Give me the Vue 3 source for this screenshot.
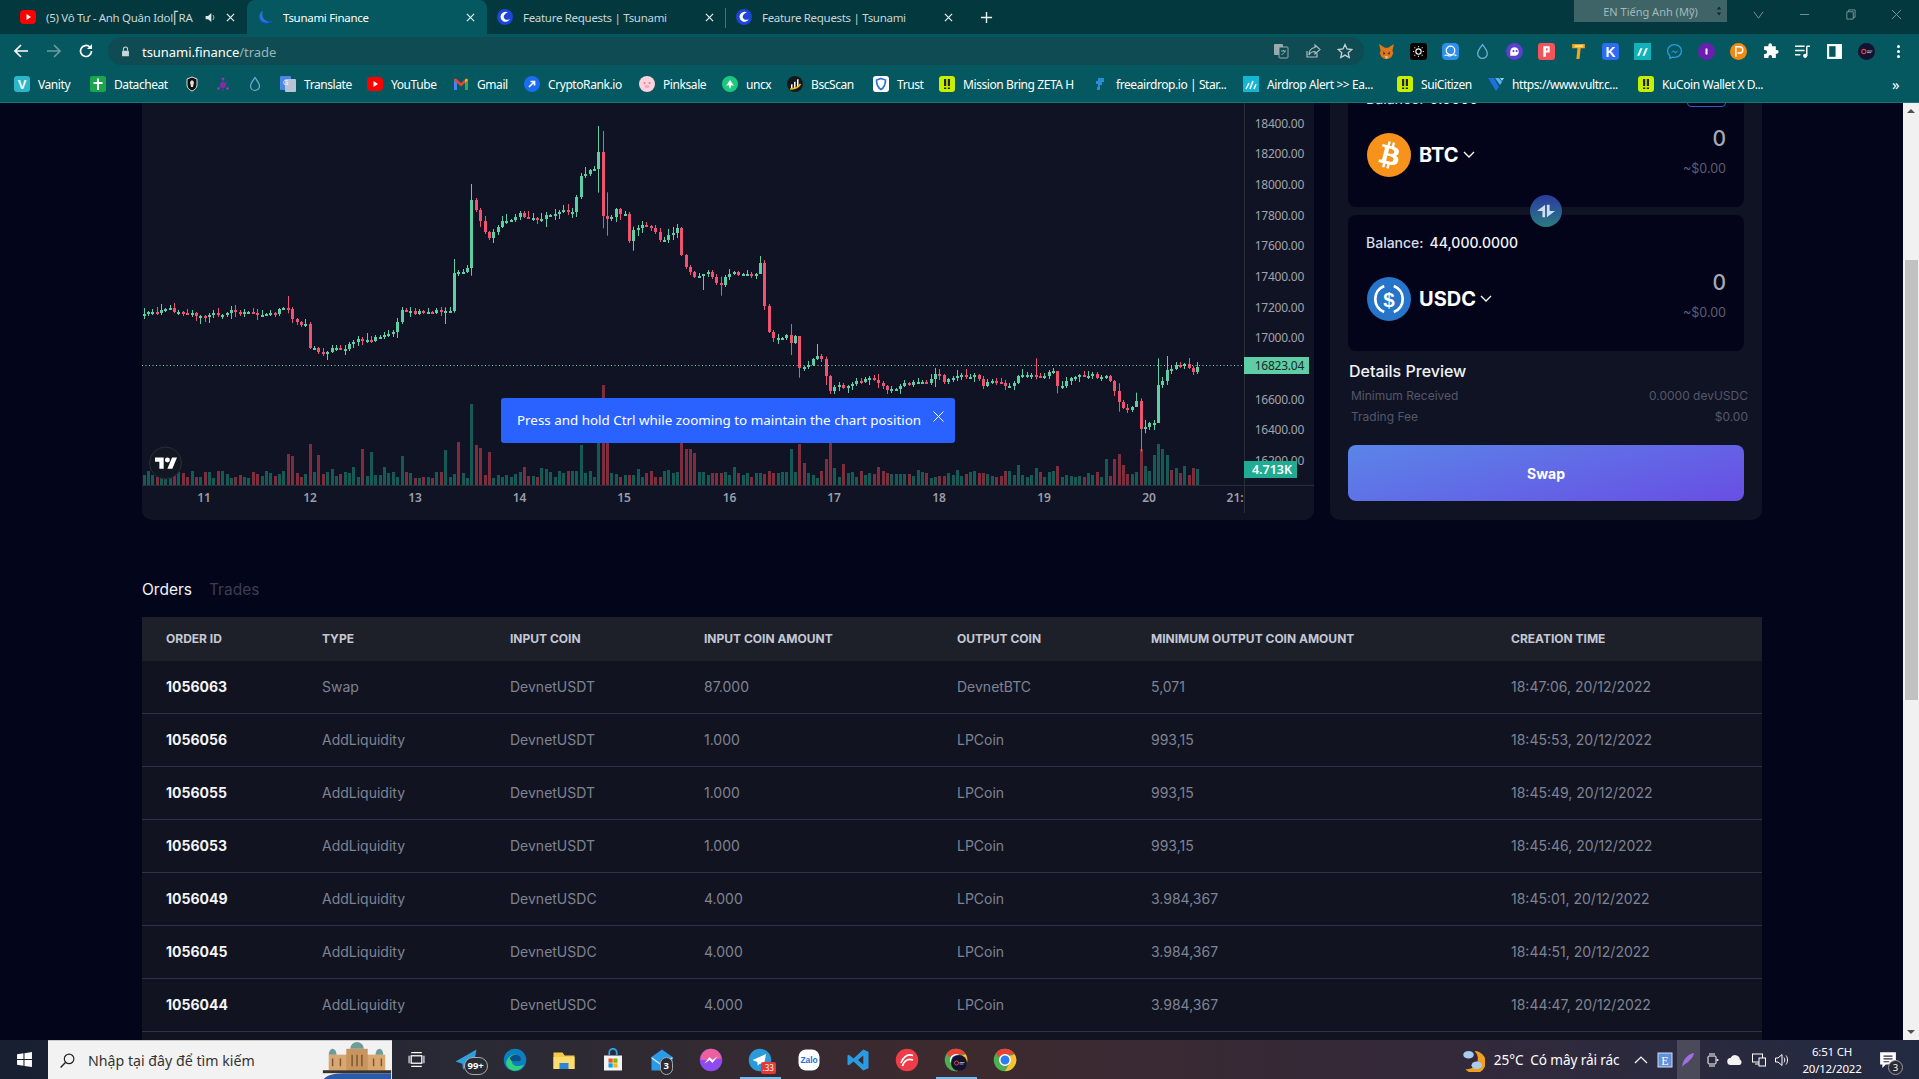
<script setup>
const icons = {
  vanity: '<rect width="16" height="16" rx="3" fill="#2bb7c9"/><text x="8" y="13" font-size="13" font-weight="700" text-anchor="middle" fill="#fff" font-family="Liberation Sans">V</text>',
  datacheat: '<rect width="16" height="16" rx="2" fill="#1aa64b"/><path d="M7 2.500h2V6h3.500v2H9v6H7V8H3.500V6H7z" fill="#fff"/>',
  shield: '<path d="M8 1l5 2v6c0 3-2.500 5-5 6-2.500-1-5-3-5-6V3z" fill="#111" stroke="#ddd"/><path d="M8 4l2 2-1 5H7L6 6z" fill="#ddd"/>',
  nodes: '<circle cx="8" cy="9" r="3" fill="#7c2fa8"/><circle cx="8" cy="3" r="1.300" fill="#9a3fb5"/><circle cx="3.500" cy="12.500" r="1.300" fill="#9a3fb5"/><circle cx="12.500" cy="12.500" r="1.300" fill="#9a3fb5"/><path d="M8 3v12M3.500 12.500L12.500 6" stroke="#7c2fa8"/>',
  drop: '<path d="M8 1.500c2 3 4.500 5.500 4.500 8.500a4.500 4.500 0 0 1-9 0c0-3 2.500-5.500 4.500-8.500z" fill="none" stroke="#6fb0dd" stroke-width="1.200"/>',
  translate: '<rect width="11" height="14" rx="1" fill="#4a86e8"/><rect x="5" y="3" width="11" height="13" rx="1" fill="#b8c4d4"/><text x="3" y="9" font-size="7" fill="#fff" font-family="Liberation Sans">G</text>',
  youtube: '<rect y="1" width="16" height="14" rx="4" fill="#f00"/><path d="M6.500 5l4.500 3-4.500 3z" fill="#fff"/>',
  gmail: '<path d="M1 3v11h3V7l4 3.500L12 7v7h3V3l-2-.5L8 7 3 2.500z" fill="#ea4335"/><path d="M1 4v10h3V7z" fill="#4285f4"/><path d="M12 7v7h3V4z" fill="#34a853"/><path d="M12 7l3-3-2-1.500L12 4z" fill="#fbbc04"/>',
  crypto: '<circle cx="8" cy="8" r="8" fill="#1b6cf2"/><path d="M5 11l5-5M6.500 5.500H10.500V9.500" stroke="#fff" stroke-width="1.700" fill="none"/>',
  pink: '<circle cx="8" cy="8" r="8" fill="#fbd3de"/><circle cx="5.500" cy="7" r="1" fill="#e77"/><circle cx="10.500" cy="7" r="1" fill="#e77"/><ellipse cx="8" cy="10.500" rx="2.500" ry="1.500" fill="#f7a8bb"/>',
  uncx: '<circle cx="8" cy="8" r="8" fill="#1fc77e"/><path d="M4 10l4-6 4 6-2.500-1L8 13 6.500 9z" fill="#fff"/>',
  bsc: '<circle cx="8" cy="8" r="8" fill="#16181c"/><path d="M4 12V8.500l1.500-.5V12zM7 12V6l1.500-.5V12zM10 12V3.500L11.500 3v7z" fill="#fff"/><path d="M3 13c4 0 8-1 10.500-5" stroke="#f0b90b" stroke-width="1.500" fill="none"/>',
  trust: '<rect width="16" height="16" rx="3" fill="#fff"/><path d="M8 2.500l4.500 1.500c0 4.500-1 7.500-4.500 9.500C4.500 11.500 3.500 8.500 3.500 4z" fill="none" stroke="#2a6fe0" stroke-width="1.700"/>',
  zeta: '<rect width="16" height="16" rx="3" fill="#c6f000"/><path d="M5 3h2.200v7H5zM8.800 3H11v7H8.800zM5 11.500h2.200V13H5zM8.800 11.500H11V13H8.800z" fill="#222"/>',
  free: '<path d="M6 2h6v4h-2v3H8v5H5v-3h1V8H4V5h2z" fill="#2a8bd8"/>',
  airdrop: '<rect width="16" height="16" fill="#15b5d4"/><path d="M3 13l3-6M7 13l3-8M11 13l2-5" stroke="#fff" stroke-width="1.500"/>',
  vultr: '<path d="M0 2h6l5 9-3 4z" fill="#1e6fe0"/><path d="M7 2h4l3 4-2 3z" fill="#58b3f0"/><path d="M12 2h4l-2 3z" fill="#9bd5fa"/>',
  tsunami: '<circle cx="8" cy="8" r="8" fill="#1d45d8"/><path d="M11 3.500a5 5 0 1 0 2 6.500c-2 1.500-5 1-6-1s1-5 4-5.500z" fill="#fff"/>',
  tsuActive: '<path d="M6 1.500c-3 2-5 6-2 10 3 3 8 3 11 1-4 .5-7-.5-8.500-3C5 7 5 4 6 1.500z" fill="#2f6fe0"/><path d="M2 11c3 4 9 4 13 1.500" stroke="#1d45d8" fill="none"/>',
  fox: '<path d="M1 1l5.500 3.500h3L15 1l-1.500 6.500 1 2-2 4-3 1.500h-3l-3-1.500-2-4 1-2z" fill="#e2761b"/><path d="M5 8l2 2-2 1zM11 8l-2 2 2 1z" fill="#233447"/><path d="M6.500 12.500h3L8 15z" fill="#f6c9a0"/>',
  blackdots: '<rect width="16" height="16" rx="3" fill="#000"/><circle cx="8" cy="8" r="2.500" fill="none" stroke="#fff"/><path d="M4 4h1v1H4zM7.500 3h1v1h-1zM11 4h1v1h-1zM3 7.500h1v1H3zM12 7.500h1v1h-1zM4 11h1v1H4zM7.500 12h1v1h-1zM11 11h1v1h-1z" fill="#fff"/>',
  aqua: '<rect width="16" height="16" rx="4" fill="#2f8fe8"/><circle cx="8" cy="7" r="4" fill="none" stroke="#fff" stroke-width="1.200"/><path d="M2.500 12c2-2 3.500 1 5.500 0s3.500-2 5.500 0" stroke="#fff" fill="none"/>',
  ghost: '<circle cx="8" cy="8" r="8" fill="#5a3fd0"/><path d="M4 8a4 4 0 0 1 8 0c0 3-2 4-4 4H4z" fill="#fff"/><circle cx="7" cy="7.500" r="1" fill="#5a3fd0"/><circle cx="10" cy="7.500" r="1" fill="#5a3fd0"/>',
  redp: '<rect width="16" height="16" rx="3" fill="#f2545b"/><path d="M5 3h6v6H7.500v4H5z" fill="#fff"/><path d="M7.500 5H9v2H7.500z" fill="#f2545b"/>',
  ttt: '<path d="M2 1h12v4h-4l-1 10H6L7 5H2z" fill="#f4a31d"/><path d="M5 2l-1 2h8l.5-2z" fill="#fbe08a"/>',
  kkk: '<rect width="16" height="16" rx="3" fill="#2d6bf0"/><text x="8" y="13" font-size="13" font-weight="700" text-anchor="middle" fill="#fff" font-family="Liberation Sans">K</text>',
  mm: '<rect width="16" height="16" fill="#11b3b8"/><path d="M3 12l3-7h2l-3 7zM8 12l3-7h2l-3 7z" fill="#fff"/>',
  msgr: '<path d="M8 1.500c-4 0-6.500 2.800-6.500 6 0 2 .8 3.500 2.200 4.700v2.300l2.200-1.200c.7.200 1.400.3 2.100.3 4 0 6.500-2.800 6.500-6s-2.500-6.100-6.500-6.100z" fill="none" stroke="#2c9be8" stroke-width="1.200"/><path d="M4 10l3-3.200 2 1.700 3-2-3 3.300-2-1.700z" fill="#2c9be8"/>',
  purple: '<circle cx="8" cy="8" r="8" fill="#6a1fb0"/><rect x="7" y="5" width="2" height="6" rx="1" fill="#f5e6ff"/>',
  orange: '<circle cx="8" cy="8" r="8" fill="#f28a11"/><path d="M5.500 13V3.500h3.500a3 3 0 0 1 0 6H7" fill="none" stroke="#fff" stroke-width="1.400"/>',
  puzzle: '<path d="M6 2a1.700 1.700 0 0 1 3.400 0v1H13v3.600h1a1.700 1.700 0 0 1 0 3.400h-1V14H9.500v-1a1.700 1.700 0 0 0-3.400 0v1H2v-3.700h1a1.800 1.800 0 0 0 0-3.600H2V3h4z" fill="#fff"/>',
  music: '<path d="M1 3h9M1 7h9M1 11h5" stroke="#fff" stroke-width="1.400"/><path d="M12 3h3M12 3v9" stroke="#fff" stroke-width="1.400" fill="none"/><circle cx="10.500" cy="12" r="2" fill="#fff"/>',
  side: '<rect x="1" y="1" width="14" height="14" fill="#fff"/><rect x="3" y="3" width="6" height="10" fill="#05565d"/>',
  avatar: '<circle cx="8" cy="8" r="8" fill="#141232"/><circle cx="5.500" cy="8" r="2" fill="none" stroke="#d44" stroke-width="1"/><path d="M8.500 7.500h5M8.500 9h4" stroke="#bbb" stroke-width=".8"/>',
  translateOut: '<rect x="1" y="1" width="9" height="11" rx="1" fill="#9aa9ad"/><rect x="6" y="4" width="9" height="11" rx="1" fill="#0e4c54" stroke="#9aa9ad"/><path d="M8 8h5M10.500 7v1M12 8c-.5 2-2 3-3.500 3.500" stroke="#9aa9ad" fill="none"/>',
  share: '<path d="M2 8v6h10v-4" fill="none" stroke="#a9bcbf" stroke-width="1.200"/><path d="M10 2l5 4.500-5 4.500V8.500C7 8.500 5 10 4 12c0-4 2-7 6-7.500z" fill="none" stroke="#a9bcbf" stroke-width="1.200"/>',
  star: '<path d="M8 1.500l2 4.500 4.800.5-3.600 3.200 1 4.800L8 12.100 3.800 14.500l1-4.800L1.200 6.500 6 6z" fill="none" stroke="#c2d0d2" stroke-width="1.300"/>',
  lock: '<rect x="3" y="7" width="10" height="8" rx="1" fill="#cbd5d6"/><path d="M5 7V4.500a3 3 0 0 1 6 0V7" fill="none" stroke="#cbd5d6" stroke-width="1.500"/>',
  win: '<path d="M1 3l6-.9V7.500H1zM8 2l7-1v6.500H8zM1 8.500h6v5.400l-6-.9zM8 8.500h7V15l-7-1z" fill="#fff"/>',
  search: '<circle cx="9.500" cy="6.500" r="4.500" fill="none" stroke="#222" stroke-width="1.100"/><path d="M6.300 9.700L1.500 14.500" stroke="#222" stroke-width="1.300"/>',
  building: '<rect x="6" y="14" width="58" height="16" fill="#d9a871"/><rect x="24" y="8" width="22" height="22" fill="#c8955f"/><path d="M28 8a7 7 0 0 1 14 0zM6 14a4 6 0 0 1 8 0zM54 14a4 6 0 0 1 8 0z" fill="#6f9c96"/><path d="M10 18v8M18 18v8M30 14v12M35 14v12M40 14v12M52 18v8M60 18v8" stroke="#7c5532" stroke-width="1.500"/><rect y="30" width="70" height="3" fill="#3a3026"/><path d="M0 40c4-6 14-7 24-7h46v7z" fill="#2a5aa8"/>',
  tasks: '<path d="M3 1.500h10M3 14.500h10" stroke="#fff" stroke-width="1.200"/><rect x="3" y="4.500" width="10" height="7" fill="none" stroke="#fff" stroke-width="1.200"/><path d="M1 4.500v7M15 4.500v7" stroke="#fff"/>',
  tele: '<path d="M1 9L15 1l-2.500 14-4-3.500L6 14.500l-.5-4z" fill="#2f9fe0"/>',
  edge: '<circle cx="8" cy="8" r="7.500" fill="#0c7ec2"/><path d="M2 10c1-5 5-6 7-5.500 3 .5 3.500 3 2.500 4.500H6c0 3 4 4 8 2-1.500 3.500-5 4.500-7.500 4C4 14.500 2.500 12.500 2 10z" fill="#2fd07e"/><path d="M6 9h5.500c1-1.500.5-4-2.500-4.500C7 4.200 5 5.500 4.500 7z" fill="#0a4f8a"/>',
  folder: '<path d="M1 3h6l1.500 2H15v9H1z" fill="#f7c948"/><rect x="1" y="6" width="14" height="8" fill="#ffdb6e"/><rect x="5" y="10" width="6" height="4" fill="#2a86d8"/>',
  store: '<path d="M2 5h12v10H2z" fill="#f1f3f5"/><path d="M5.500 5V3a2.500 2.500 0 0 1 5 0v2" fill="none" stroke="#2ca0e8" stroke-width="1.200"/><rect x="5" y="7" width="2.800" height="2.800" fill="#f25022"/><rect x="8.200" y="7" width="2.800" height="2.800" fill="#7fba00"/><rect x="5" y="10.200" width="2.800" height="2.800" fill="#00a4ef"/><rect x="8.200" y="10.200" width="2.800" height="2.800" fill="#ffb900"/>',
  mail: '<path d="M1 6l7-5 7 5v9H1z" fill="#2a9be8"/><path d="M1 6l7 5 7-5v1l-7 5-7-5z" fill="#d7eefc"/>',
  mess: '<circle cx="8" cy="8" r="7.500" fill="#8d4bf0"/><path d="M1 8a7 7 0 0 1 14-1L8 8z" fill="#ee5fa0"/><path d="M3.500 10.500L7 6l2 2 3.500-2.500L9 10 7 8z" fill="#fff"/>',
  teleC: '<circle cx="8" cy="8" r="7.500" fill="#2b9ad9"/><path d="M3 8l9-4-1.500 8-2.500-1.700-1.500 1.500-.3-2.500z" fill="#fff"/>',
  zalo: '<rect x="1" y="1" width="14" height="14" rx="5" fill="#fff"/><text x="8" y="10" font-size="5.600" font-weight="700" text-anchor="middle" fill="#1a6fe0" font-family="Liberation Sans">Zalo</text>',
  vsc: '<path d="M11.500 1L15 2.500v11L11.500 15 5 9l-3 2.500L1 11V5l1-.5L5 7zM11.500 5L8 8l3.500 3z" fill="#2a9be0"/>',
  red: '<circle cx="8" cy="8" r="7.500" fill="#ee3d48"/><path d="M4 10c2-5 5-6 8-5M5 12c1-4 4-5 7-4" stroke="#fff" fill="none" stroke-width="1.100"/>',
  chrome: '<circle cx="8" cy="8" r="7.500" fill="#4caf50"/><path d="M8 .5a7.500 7.500 0 0 1 6.500 3.700L8 4.500 3 6 2.200 3.300A7.500 7.500 0 0 1 8 .5z" fill="#ea4335"/><path d="M14.500 4.200A7.500 7.500 0 0 1 8 15.500l3.500-6-1-4z" fill="#fbc02d"/><circle cx="8" cy="8" r="3.500" fill="#2d7cf0" stroke="#fff"/>',
  weather: '<path d="M9 2a7.500 7.500 0 1 1-6 12 7 7 0 0 0 6-12z" fill="#f0a01e"/><ellipse cx="5" cy="4.500" rx="3.500" ry="2.500" fill="#a9cdef"/><ellipse cx="10.500" cy="11.500" rx="3.500" ry="2.500" fill="#a9cdef"/>',
  up: '<path d="M2 11l6-6 6 6" fill="none" stroke="#fff" stroke-width="1.200"/>',
  ee: '<rect x="1" y="1" width="14" height="14" fill="#5f92d8" stroke="#cfe0f5"/><text x="8" y="12.500" font-size="12" text-anchor="middle" fill="#fff" font-family="Liberation Serif">E</text>',
  feather: '<path d="M14 1C8 2 3 7 2 15c2-3 6-4 8-7 2-2 3.500-4 4-7z" fill="#a06ee0"/>',
  camera: '<rect x="4" y="4" width="8" height="8" rx="1" fill="none" stroke="#fff"/><path d="M5 2h6M5 14h6" stroke="#fff"/><circle cx="13.500" cy="8" r="1" fill="#fff"/>',
  cloud: '<path d="M4 13a3.500 3.500 0 0 1-.5-7 5 5 0 0 1 9.500 1.500A3 3 0 0 1 12.500 13z" fill="#f3f3f3"/>',
  net: '<rect x="1.500" y="2" width="10" height="8" fill="none" stroke="#fff"/><rect x="8" y="6" width="6.500" height="8" fill="#2b2a3f" stroke="#fff"/><path d="M4 12h4" stroke="#fff"/>',
  speaker: '<path d="M1.500 6h2.500l4-3.500v11L4 10H1.500z" fill="none" stroke="#fff"/><path d="M10 5.500c1 1.500 1 3.500 0 5M12 3.500c2 2.500 2 6.500 0 9" fill="none" stroke="#fff"/>',
  notify: '<path d="M1 1h14v11H6l-3 3v-3H1z" fill="#fff"/><path d="M4 4.500h8M4 7h8M4 9.500h5" stroke="#2c2a40"/>'
}

const tabs = [
  { title: '(5) Vô Tư - Anh Quân Idol⎡RA', icon: 'youtube', first: true, sound: true },
  { title: 'Tsunami Finance', icon: 'tsuActive', active: true },
  { title: 'Feature Requests | Tsunami', icon: 'tsunami', sep: true },
  { title: 'Feature Requests | Tsunami', icon: 'tsunami' }
]
const bookmarks = [
  ['vanity', 'Vanity', 76], ['datacheat', 'Datacheat', 94], ['shield', '', 31], ['nodes', '', 32], ['drop', '', 33],
  ['translate', 'Translate', 87], ['youtube', 'YouTube', 86], ['gmail', 'Gmail', 71], ['crypto', 'CryptoRank.io', 115],
  ['pink', 'Pinksale', 83], ['uncx', 'uncx', 65], ['bsc', 'BscScan', 86], ['trust', 'Trust', 66],
  ['zeta', 'Mission Bring ZETA H', 153], ['free', 'freeairdrop.io | Star...', 151], ['airdrop', 'Airdrop Alert >> Ea...', 154],
  ['zeta', 'SuiCitizen', 91], ['vultr', 'https://www.vultr.c...', 150], ['zeta', 'KuCoin Wallet X D...', 230]
].map(([icon, label, w]) => ({ icon, label, w }))
const exts = ['fox', 'blackdots', 'aqua', 'drop', 'ghost', 'redp', 'ttt', 'kkk', 'mm', 'msgr', 'purple', 'orange', 'puzzle', 'music', 'side', 'avatar']
const apps = [
  { i: 'tele', badge: '99+' }, { i: 'edge' }, { i: 'folder' }, { i: 'store' }, { i: 'mail', badge: '3' }, { i: 'mess' },
  { i: 'teleC', red: '.33', on: true }, { i: 'zalo' }, { i: 'vsc' }, { i: 'red' }, { i: 'chrome', dot: true, on: true }, { i: 'chrome' }
]
const tray = ['up', 'ee', 'feather', 'camera', 'cloud', 'net', 'speaker']

const columns = ['ORDER ID', 'TYPE', 'INPUT COIN', 'INPUT COIN AMOUNT', 'OUTPUT COIN', 'MINIMUM OUTPUT COIN AMOUNT', 'CREATION TIME']
const colWidths = [156, 188, 194, 253, 194, 360, 275]
const rows = [
  ['1056063', 'Swap', 'DevnetUSDT', '87.000', 'DevnetBTC', '5,071', '18:47:06, 20/12/2022'],
  ['1056056', 'AddLiquidity', 'DevnetUSDT', '1.000', 'LPCoin', '993,15', '18:45:53, 20/12/2022'],
  ['1056055', 'AddLiquidity', 'DevnetUSDT', '1.000', 'LPCoin', '993,15', '18:45:49, 20/12/2022'],
  ['1056053', 'AddLiquidity', 'DevnetUSDT', '1.000', 'LPCoin', '993,15', '18:45:46, 20/12/2022'],
  ['1056049', 'AddLiquidity', 'DevnetUSDC', '4.000', 'LPCoin', '3.984,367', '18:45:01, 20/12/2022'],
  ['1056045', 'AddLiquidity', 'DevnetUSDC', '4.000', 'LPCoin', '3.984,367', '18:44:51, 20/12/2022'],
  ['1056044', 'AddLiquidity', 'DevnetUSDC', '4.000', 'LPCoin', '3.984,367', '18:44:47, 20/12/2022']
]

// --- chart -------------------------------------------------------------
const z3x = (x) => 130 + x / 2.45
const z4x = (x) => 770 + x / 2.8
const zy = (y) => 100 + y / 3
const wp3 = [[30,642],[90,625],[150,640],[175,652],[240,635],[300,640],[340,642],[385,625],[400,665],[430,672],[440,740],[465,760],[500,742],[530,745],[550,722],[590,720],[640,700],[655,665],[665,635],[700,640],[740,640],[760,630],[790,635],[793,515],[830,510],[836,297],[860,370],[878,420],[900,375],[950,345],[1000,358],[1040,335],[1085,335],[1105,225],[1135,210],[1147,155],[1157,350],[1170,360],[1190,330],[1220,350],[1222,420],[1235,385],[1280,380],[1300,420],[1340,385],[1352,480],[1362,505],[1385,530],[1415,515],[1445,555],[1470,520],[1540,525],[1545,480],[1553,610]]
const wp4 = [[0,720],[10,720],[45,700],[55,735],[72,700],[82,800],[100,805],[120,775],[150,770],[157,840],[170,885],[185,850],[205,870],[240,850],[275,830],[300,850],[350,875],[365,850],[410,850],[450,840],[465,815],[490,845],[525,825],[580,830],[590,855],[640,845],[660,860],[690,845],[695,825],[745,828],[760,835],[775,810],[795,810],[805,860],[840,840],[870,825],[890,820],[910,835],[950,832],[965,880],[990,925],[1010,920],[1025,900],[1037,985],[1050,975],[1075,965],[1088,840],[1100,840],[1110,810],[1125,812],[1135,790],[1170,800],[1185,818],[1197,795]]
const points = [...wp3.map(([x, y]) => [z3x(x), zy(y)]), ...wp4.map(([x, y]) => [z4x(x), zy(y)])]
const X0 = 143.5
const STEP = 4.373
const COUNT = 242
let seed = 12345
const rnd = () => { seed = (seed * 1103515245 + 12345) & 0x7fffffff; return seed / 0x7fffffff }
const idxOf = (x) => Math.round((x - X0) / STEP)
const closeAt = (x) => {
  for (let k = 1; k < points.length; k++) {
    if (x <= points[k][0]) {
      const [a, b] = [points[k - 1], points[k]]
      const t = (x - a[0]) / Math.max(b[0] - a[0], 0.01)
      return a[1] + (b[1] - a[1]) * t
    }
  }
  return points[points.length - 1][1]
}
const wicks = new Map()
;[[836,252,527],[793,477,638],[386,588,640],[1147,78,278],[1157,93,385],[1170,277,407],[1233,380,452],[1405,525,570],[1447,530,587],[1545,468,522],[1553,480,630],[772,622,672],[173,645,672]]
  .forEach(([x, a, b]) => wicks.set(idxOf(z3x(x)), [zy(a), zy(b)]))
;[[57,672,765],[82,725,833],[132,732,780],[155,770,855],[743,775,838],[805,835,880],[975,850,935],[1037,895,1055],[1025,878,905],[1088,775,920],[1110,768,855],[1050,960,1000]]
  .forEach(([x, a, b]) => wicks.set(idxOf(z4x(x)), [zy(a), zy(b)]))
const GREEN = '#5fcea4'
const RED = '#ef5370'
const closes = []
for (let i = 0; i < COUNT; i++) closes.push(Math.round(closeAt(X0 + i * STEP) + (rnd() - 0.5) * 4.4))
const candles = closes.map((c, i) => {
  const o = i ? closes[i - 1] : c + 1
  const top = Math.min(o, c)
  const bottom = Math.max(o, c)
  const w = wicks.get(i)
  const hi = w ? w[0] : Math.round(top - rnd() * rnd() * 7 - 1)
  const lo = w ? w[1] : Math.round(bottom + rnd() * rnd() * 7 + 1)
  return {
    x: Math.round(X0 + i * STEP),
    top,
    h: Math.max(bottom - top, 2),
    hi,
    lo,
    color: c <= o ? GREEN : RED
  }
})
const vols = candles.map((c) => ({ x: c.x - 1, h: Math.round(7 + rnd() * 7 + (rnd() > 0.88 ? 5 : 0)), up: c.color === GREEN }))
const setVol = (x, top, up) => {
  const v = vols[idxOf(x)]
  if (v) { v.h = Math.round((1156 - top) / 3); v.up = up }
}
;[[386,1062,0],[395,1070,0],[438,1032,0],[462,1065,0],[566,1047,0],[589,1056,1],[665,1068,1],[770,1050,1],[802,1026,0],[836,912,1],[845,1035,0],[856,1045,0],[878,1056,0],[1105,1035,1],[1147,1000,1],[1157,855,0],[1167,1030,0],[1350,1030,0],[1360,1047,0],[1370,1047,0],[1383,1060,0]]
  .forEach(([x, t, u]) => setVol(z3x(x), t, !!u))
;[[58,1047,1],[82,1032,0],[93,1090,0],[155,1077,0],[166,1030,0],[180,1105,1],[203,1092,0],[695,1095,1],[745,1105,1],[805,1098,0],[940,1078,1],[965,1078,0],[975,1062,0],[987,1095,0],[1037,1048,0],[1050,1098,1],[1075,1065,1],[1085,1032,1],[1098,1047,1],[1110,1065,1],[1122,1112,0],[1160,1100,1],[1197,1107,1]]
  .forEach(([x, t, u]) => setVol(z4x(x), t, !!u))

const prices = [['18400.00',123],['18200.00',153],['18000.00',184.5],['17800.00',215.5],['17600.00',245.5],['17400.00',276.5],['17200.00',307.5],['17000.00',337.5],['16600.00',399.5],['16400.00',429.5],['16200.00',460]]
const days = [['11',204],['12',310],['13',415],['14',519.5],['15',624],['16',729.5],['17',834],['18',939],['19',1044],['20',1149],['21:00',1242]]
</script>

<template>
  <div class="root">
    <header class="browser">
      <div class="tabstrip">
        <div v-for="t in tabs" :key="t.title + t.icon" class="tab" :class="{ active: t.active, first: t.first, sep: t.sep }">
          <svg class="fav" viewBox="0 0 16 16" v-html="icons[t.icon]"></svg>
          <span class="tab-title">{{ t.title }}</span>
          <svg v-if="t.sound" class="sound" viewBox="0 0 16 16"><path d="M2 6h3l4-3.500v11L5 10H2z" fill="#dfe8e9"/><path d="M11 5c1.500 2 1.500 4 0 6" fill="none" stroke="#dfe8e9"/></svg>
          <svg class="tab-x" viewBox="0 0 10 10"><path d="M1 1l8 8M9 1l-8 8" stroke="#e8f0f1" stroke-width="1.300"/></svg>
        </div>
        <svg class="plus" viewBox="0 0 14 14"><path d="M7 1v12M1 7h12" stroke="#e8f0f1" stroke-width="1.500"/></svg>
        <div class="lang">
          <span>EN Tiếng Anh (Mỹ)</span>
          <svg class="lang-arrows" viewBox="0 0 8 16"><path d="M1 6l3-4 3 4zM1 10l3 4 3-4z" fill="#14282b"/></svg>
        </div>
        <div class="winctl">
          <svg viewBox="0 0 12 12"><path d="M1 3l5 7 5-7" fill="none" stroke="#7d9a9d"/></svg>
          <svg viewBox="0 0 12 12"><path d="M1 6h10" stroke="#7d9a9d"/></svg>
          <svg viewBox="0 0 12 12"><path d="M2 3h7v8H2zM4 3V1h7v8H9" fill="none" stroke="#7d9a9d"/></svg>
          <svg viewBox="0 0 12 12"><path d="M1 1l10 10M11 1L1 11" stroke="#7d9a9d"/></svg>
        </div>
      </div>
      <div class="toolbar">
        <button class="nav">
          <svg viewBox="0 0 16 16"><path d="M15 8H2M8 2L2 8l6 6" fill="none" stroke="#fff" stroke-width="1.700"/></svg>
        </button>
        <button class="nav">
          <svg viewBox="0 0 16 16"><path d="M1 8h13M8 2l6 6-6 6" fill="none" stroke="#6e9a9e" stroke-width="1.700"/></svg>
        </button>
        <button class="nav">
          <svg viewBox="0 0 16 16"><path d="M13.500 8a5.500 5.500 0 1 1-1.700-4" fill="none" stroke="#fff" stroke-width="1.700"/><path d="M14 1v5H9z" fill="#fff"/></svg>
        </button>
        <div class="omnibox">
          <svg class="lock" viewBox="0 0 16 16" v-html="icons.lock"></svg>
          <span class="url">tsunami.finance<span class="url-dim">/trade</span></span>
          <div class="omni-icons">
            <svg viewBox="0 0 16 16" v-html="icons.translateOut"></svg>
            <svg viewBox="0 0 16 16" v-html="icons.share"></svg>
            <svg viewBox="0 0 16 16" v-html="icons.star"></svg>
          </div>
        </div>
        <div class="exts">
          <span v-for="(e, n) in exts" :key="n" class="ext">
            <svg viewBox="0 0 16 16" v-html="icons[e]"></svg>
          </span>
          <span class="ext dots"><i></i><i></i><i></i></span>
        </div>
      </div>
      <div class="bookmarks">
        <div v-for="(b, n) in bookmarks" :key="n" class="bm" :style="{ width: b.w + 'px' }">
          <svg viewBox="0 0 16 16" v-html="icons[b.icon]"></svg>
          <span v-if="b.label">{{ b.label }}</span>
        </div>
        <span class="more">»</span>
      </div>
    </header>

    <main class="page">
      <div class="content">
        <section class="trade">
          <div class="chart">
            <svg class="chart-svg" viewBox="142 53 1172 467" width="1172" height="467">
              <g>
                <rect v-for="(v, n) in vols" :key="'v' + n" :x="v.x" :y="485 - v.h" width="3" :height="v.h" :fill="v.up ? '#155a55' : '#7d2d3c'" />
              </g>
              <g>
                <g v-for="(c, n) in candles" :key="'c' + n">
                  <rect :x="c.x" :y="c.hi" width="1" :height="c.lo - c.hi" :fill="c.color" />
                  <rect :x="c.x - 1" :y="c.top" width="3" :height="c.h" :fill="c.color" />
                </g>
              </g>
              <path d="M142 365.500H1244" stroke="#7fd6b6" stroke-dasharray="1 2.500" />
              <path d="M142 485.500H1314" stroke="#2a2e39" />
              <text v-for="d in days" :key="d[0]" class="t-time" :x="d[1]" y="502" text-anchor="middle">{{ d[0] }}</text>
              <rect x="1244" y="53" width="70" height="467" fill="#101323" />
              <path d="M1244.500 53V513" stroke="#2a2e39" />
              <path d="M1244 485.500H1314" stroke="#2a2e39" />
              <text v-for="p in prices" :key="p[0]" class="t-price" x="1304" :y="p[1] + 4.500" text-anchor="end">{{ p[0] }}</text>
              <rect x="1244" y="357" width="65" height="17" fill="#5fcea4" />
              <text class="t-price t-dark" x="1304" y="370" text-anchor="end">16823.04</text>
              <rect x="1244" y="461" width="53" height="17" fill="#20ab93" />
              <text class="t-vol" x="1272" y="474" text-anchor="middle">4.713K</text>
              <circle cx="165.500" cy="463" r="16" fill="#131722" stroke="#2a2e39" stroke-width="1" />
              <g transform="translate(155 455) scale(.62)">
                <path d="M14 22H7V11H0V4h14v18zM28 22h-8l7.500-18h8L28 22z" fill="#fff" />
                <circle cx="20" cy="8" r="4" fill="#fff" />
              </g>
            </svg>
            <div class="hint">
              <span>Press and hold Ctrl while zooming to maintain the chart position</span>
              <svg viewBox="0 0 11 11"><path d="M.5.5l10 10M10.500.5l-10 10" stroke="#fff" /></svg>
            </div>
          </div>

          <aside class="panel">
            <div class="swap-box">
              <div class="coin-card">
                <div class="bal-row">
                  <span class="bal-label">Balance:</span><span class="bal-value">0.0000</span>
                  <button class="max">Max</button>
                </div>
                <div class="coin-row">
                  <svg class="coin" viewBox="0 0 32 32">
                    <circle cx="16" cy="16" r="16" fill="#f7931a" />
                    <path fill="#fff" d="M23.189 14.020c.314-2.096-1.283-3.223-3.465-3.975l.708-2.840-1.728-.430-.690 2.765c-.454-.114-.920-.220-1.385-.326l.695-2.783L15.596 6l-.708 2.839c-.376-.086-.746-.170-1.104-.260l.002-.009-2.384-.595-.460 1.846s1.283.294 1.256.312c.700.175.826.638.805 1.006l-.806 3.235c.048.012.110.030.180.057l-.183-.045-1.130 4.532c-.086.212-.303.531-.793.410.018.025-1.256-.313-1.256-.313l-.858 1.978 2.250.561c.418.105.828.215 1.231.318l-.715 2.872 1.727.430.708-2.840c.472.127.930.245 1.378.357l-.706 2.828 1.728.430.715-2.866c2.948.558 5.164.333 6.097-2.333.752-2.146-.037-3.385-1.588-4.192 1.130-.260 1.980-1.003 2.207-2.538zm-3.950 5.538c-.533 2.147-4.148.986-5.320.695l.950-3.805c1.172.293 4.929.872 4.370 3.110zm.535-5.569c-.487 1.953-3.495.960-4.470.717l.860-3.450c.975.243 4.118.696 3.610 2.733z" />
                  </svg>
                  <span class="coin-name">BTC</span>
                  <svg class="chev" viewBox="0 0 12 8"><path d="M1 1l5 5 5-5" fill="none" stroke="#fff" stroke-width="1.300" /></svg>
                  <div class="amount"><span class="amt">0</span><span class="usd">~$0.00</span></div>
                </div>
              </div>
              <div class="coin-card">
                <div class="bal-row">
                  <span class="bal-label">Balance:</span><span class="bal-value">44,000.0000</span>
                </div>
                <div class="coin-row">
                  <svg class="coin" viewBox="0 0 32 32">
                    <circle cx="16" cy="16" r="16" fill="#2775ca" />
                    <path d="M12.500 6.500a10.200 10.200 0 0 0 0 19M19.500 6.500a10.200 10.200 0 0 1 0 19" fill="none" stroke="#fff" stroke-width="2" />
                    <text x="16" y="21.500" font-size="15" font-weight="700" text-anchor="middle" fill="#fff" font-family="Liberation Sans">$</text>
                  </svg>
                  <span class="coin-name">USDC</span>
                  <svg class="chev" viewBox="0 0 12 8"><path d="M1 1l5 5 5-5" fill="none" stroke="#fff" stroke-width="1.300" /></svg>
                  <div class="amount"><span class="amt">0</span><span class="usd">~$0.00</span></div>
                </div>
              </div>
              <div class="flip">
                <svg viewBox="0 0 20 20"><path d="M9 3v14H6V10H0zM11 3v14l9-7h-6V3z" fill="#cfdcf5" /></svg>
              </div>
            </div>
            <h3 class="details-title">Details Preview</h3>
            <div class="detail"><span>Minimum Received</span><span>0.0000 devUSDC</span></div>
            <div class="detail"><span>Trading Fee</span><span>$0.00</span></div>
            <button class="swap-btn">Swap</button>
          </aside>
        </section>

        <nav class="order-tabs">
          <span class="on">Orders</span>
          <span>Trades</span>
        </nav>

        <table class="orders">
          <colgroup><col v-for="(w, n) in colWidths" :key="n" :style="{ width: w + 'px' }" /></colgroup>
          <thead><tr><th v-for="c in columns" :key="c">{{ c }}</th></tr></thead>
          <tbody>
            <tr v-for="r in rows" :key="r[0]"><td v-for="(v, n) in r" :key="n">{{ v }}</td></tr>
            <tr><td v-for="n in 7" :key="n">&nbsp;</td></tr>
          </tbody>
        </table>
      </div>
      <div class="scrollbar">
        <svg viewBox="0 0 16 17" class="sb-arrow"><path d="M4 10l4-4 4 4z" fill="#505050" /></svg>
        <div class="thumb"></div>
        <svg viewBox="0 0 16 17" class="sb-arrow sb-bottom"><path d="M4 7l4 4 4-4z" fill="#505050" /></svg>
      </div>
    </main>

    <footer class="taskbar">
      <div class="start"><svg viewBox="0 0 16 16" v-html="icons.win"></svg></div>
      <div class="search">
        <svg class="s-ic" viewBox="0 0 16 16" v-html="icons.search"></svg>
        <span>Nhập tại đây để tìm kiếm</span>
        <svg class="s-pic" viewBox="0 0 70 40" v-html="icons.building"></svg>
      </div>
      <div class="taskview"><svg viewBox="0 0 16 16" v-html="icons.tasks"></svg></div>
      <div class="apps">
        <div v-for="(a, n) in apps" :key="n" class="app" :class="{ on: a.on }">
          <svg viewBox="0 0 16 16" v-html="icons[a.i]"></svg>
          <span v-if="a.badge" class="badge">{{ a.badge }}</span>
          <span v-if="a.red" class="badge-red">{{ a.red }}</span>
          <svg v-if="a.dot" class="app-dot" viewBox="0 0 16 16" v-html="icons.avatar"></svg>
        </div>
      </div>
      <div class="sys">
        <svg class="weather" viewBox="0 0 16 16" v-html="icons.weather"></svg>
        <span class="weather-text">25°C&nbsp; Có mây rải rác</span>
        <span v-for="t in tray" :key="t" class="tray" :class="{ hl: t === 'feather' }">
          <svg viewBox="0 0 16 16" v-html="icons[t]"></svg>
        </span>
        <div class="clock"><span>6:51 CH</span><span>20/12/2022</span></div>
        <div class="notif">
          <svg viewBox="0 0 16 16" v-html="icons.notify"></svg>
          <span>3</span>
        </div>
      </div>
    </footer>
  </div>
</template>

<style>
html, body { margin: 0; background: #03051a; overflow: hidden; }
</style>

<style scoped>
.root { width: 1919px; height: 1079px; display: flex; flex-direction: column; overflow: hidden; font-family: Inter, "Noto Sans", sans-serif; background: #03051a; }
svg { display: block; flex: none; }
button { border: 0; padding: 0; background: none; font: inherit; }

/* browser chrome */
.browser { flex: none; height: 103px; background: #05585f; font-family: "Noto Sans", sans-serif; color: #fff; font-size: 12px; border-bottom: 1px solid #16767c; box-sizing: border-box; }
.tabstrip { height: 34px; background: #03383f; display: flex; align-items: flex-end; position: relative; }
.tab { width: 239px; height: 34px; box-sizing: border-box; padding: 0 10px; display: flex; align-items: center; position: relative; color: #c8d6d8; flex: none; }
.tab.first { width: 237px; margin-left: 10px; }
.tab.active { width: 240px; background: #05585f; color: #fff; border-radius: 8px 8px 0 0; }
.tab.sep::after { content: ""; position: absolute; right: 0; top: 8px; bottom: 6px; width: 1px; background: #4b7377; }
.fav { width: 16px; height: 16px; margin-right: 10px; }
.tab-title { flex: 1; min-width: 0; overflow: hidden; white-space: nowrap; font-size: 11.500px; letter-spacing: -.3px; }
.sound { width: 13px; height: 13px; margin: 0 9px 0 8px; }
.tab-x { width: 9px; height: 9px; margin-right: 2px; }
.plus { width: 13px; height: 13px; margin: 0 0 10px 15px; }
.lang { position: absolute; left: 1574px; top: 0; width: 153px; height: 22px; background: #3e6467; display: flex; align-items: center; justify-content: center; color: #a3b9bb; font-size: 11px; }
.lang-arrows { position: absolute; right: 5px; top: 5px; width: 6px; height: 12px; }
.winctl { position: absolute; right: 0; top: 0; width: 184px; height: 28px; display: grid; grid-template-columns: repeat(4, 46px); align-items: center; justify-items: center; }
.winctl svg { width: 11px; height: 11px; }
.toolbar { height: 34px; display: flex; align-items: center; }
.nav { width: 32.500px; height: 34px; display: flex; align-items: center; justify-content: center; }
.nav:first-child { margin-left: 5px; }
.nav svg { width: 16px; height: 16px; }
.omnibox { margin-left: 5.500px; width: 1256px; height: 28px; border-radius: 14px; background: #0e4b53; display: flex; align-items: center; padding: 0 10px 0 12px; box-sizing: border-box; }
.lock { width: 11px; height: 11px; }
.url { margin-left: 11px; font-size: 13px; letter-spacing: -.05px; position: relative; top: .5px; }
.url-dim { color: #9ab4b7; }
.omni-icons { margin-left: auto; display: flex; gap: 16px; margin-right: 1px; }
.omni-icons svg { width: 16px; height: 16px; }
.exts { margin-left: 6px; display: flex; }
.ext { width: 32.060px; display: flex; align-items: center; justify-content: center; }
.ext svg { width: 17px; height: 17px; }
.dots { flex-direction: column; gap: 2px; }
.dots i { width: 3px; height: 3px; border-radius: 50%; background: #fff; }
.bookmarks { height: 34px; padding: 0 0 2px 14px; box-sizing: border-box; display: flex; align-items: center; position: relative; }
.bm { display: flex; align-items: center; gap: 8px; flex: none; white-space: nowrap; letter-spacing: -.42px; }
.bm svg { width: 16px; height: 16px; }
.more { position: absolute; left: 1892px; top: 6px; font-size: 15px; }

/* page */
.page { flex: 1; min-height: 0; display: flex; overflow: hidden; }
.content { flex: 1; min-width: 0; padding-left: 142px; margin-top: -50px; }
.trade { width: 1620px; display: flex; gap: 16px; }
.chart { width: 1172px; height: 467px; flex: none; position: relative; background: #101323; border-radius: 0 0 10px 10px; overflow: hidden; }
.t-time { font: 600 12px "Noto Sans", sans-serif; fill: #9a9ea8; }
.t-price { font: 12px "Noto Sans", sans-serif; fill: #a0a3ac; letter-spacing: -.25px; }
.t-dark { fill: #1a2a2a; }
.t-vol { font: 600 12.500px "Noto Sans", sans-serif; fill: #fff; }
.hint { position: absolute; left: 359px; top: 345px; width: 454px; height: 45px; box-sizing: border-box; padding: 0 11px 2px 16px; background: #2962ff; border-radius: 3px; color: #fff; font: 13.400px "Noto Sans", sans-serif; display: flex; align-items: center; justify-content: space-between; }
.hint svg { width: 11px; height: 11px; margin-top: -6px; }

.panel { width: 432px; height: 467px; box-sizing: border-box; padding: 18px; background: #101323; border-radius: 0 0 10px 10px; flex: none; }
.swap-box { position: relative; display: flex; flex-direction: column; gap: 8px; }
.coin-card { height: 136px; box-sizing: border-box; padding: 17px 18px 0; background: #03041a; border-radius: 8px; }
.bal-row { height: 20px; display: flex; align-items: center; font-size: 14px; font-weight: 500; color: #d8dce6; }
.bal-value { margin-left: 6px; color: #f2f4f8; }
.max { margin-left: auto; margin-top: -6px; width: 39px; height: 24px; box-sizing: border-box; border: 1px solid #3559c8; border-radius: 4px; color: #5c84ea; font-size: 12px; }
.coin-row { margin-top: 15px; height: 64px; display: flex; align-items: center; }
.coin { width: 44px; height: 44px; margin-left: 1px; }
.coin-name { margin-left: 8px; font-size: 20px; font-weight: 700; color: #fff; }
.chev { width: 12px; height: 8px; margin-left: 4px; }
.amount { margin-left: auto; display: flex; flex-direction: column; align-items: flex-end; height: 60px; }
.amt { font-size: 21px; line-height: 28px; font-weight: 500; color: #a6aab4; }
.usd { font-size: 12.500px; line-height: 32px; color: #5c5f70; }
.flip { position: absolute; left: 182px; top: 124px; width: 32px; height: 32px; border-radius: 50%; background: linear-gradient(180deg, #2b3b9e, #2a7b82); display: flex; align-items: center; justify-content: center; }
.flip svg { width: 18px; height: 18px; }
.details-title { margin: 10px 0 4px 1px; font-size: 16px; line-height: 20px; font-weight: 500; color: #f1f3f7; }
.detail { height: 21px; margin: 0 -4px 0 3px; display: flex; align-items: center; justify-content: space-between; font-size: 12px; color: #54576b; }
.swap-btn { margin-top: 18px; width: 396px; height: 56px; border-radius: 8px; background: linear-gradient(165deg, #5a85e8, #694ee4); color: #fff; font-size: 14px; font-weight: 700; display: block; }

.order-tabs { margin-top: 58px; height: 24px; display: flex; align-items: center; gap: 17px; font-size: 15.500px; color: #3b3e52; padding-bottom: 1px; box-sizing: border-box; }
.order-tabs .on { color: #f1f3f7; }
.orders { margin-top: 15px; width: 1620px; table-layout: fixed; border-collapse: separate; border-spacing: 0; }
th { height: 44px; padding: 0 0 2px 24px; background: #1e2029; text-align: left; font-size: 12px; font-weight: 700; color: #c3c8d6; box-sizing: border-box; white-space: nowrap; }
td { height: 53px; padding: 0 0 2px 24px; background: #111320; border-bottom: 1px solid #2f3341; font-size: 14px; color: #7e8394; box-sizing: border-box; white-space: nowrap; }
td:first-child { font-weight: 700; color: #f4f5f8; }

.scrollbar { flex: none; width: 16px; background: #f1f1f1; position: relative; }
.sb-arrow { width: 16px; height: 17px; }
.sb-bottom { position: absolute; left: 0; bottom: 0; }
.thumb { margin: 140px 1px 0 2px; height: 440px; background: #c1c1c1; }

/* taskbar */
.taskbar { flex: none; height: 39px; display: flex; align-items: stretch; background: linear-gradient(90deg, #171f31 0%, #2a2a35 25%, #3d2a2e 50%, #33293a 75%, #222a42 100%); color: #fff; font-family: "Noto Sans", sans-serif; }
.start { width: 48px; display: flex; align-items: center; justify-content: center; }
.start svg { width: 17px; height: 17px; }
.search { width: 344px; background: #f2f2f2; border-top: 1px solid #c9c9c9; box-sizing: border-box; display: flex; align-items: center; color: #333; font-size: 14.200px; position: relative; overflow: hidden; }
.s-ic { width: 17px; height: 17px; margin: 0 12px 0 11px; }
.s-pic { position: absolute; right: 0; top: 0; width: 70px; height: 39px; }
.taskview { width: 48px; display: flex; align-items: center; justify-content: center; }
.taskview svg { width: 17px; height: 17px; }
.apps { margin-left: 1.500px; display: flex; }
.app { width: 49px; display: flex; align-items: center; justify-content: center; position: relative; box-sizing: border-box; }
.app > svg:first-child { width: 24px; height: 24px; }
.app.on::after { content: ""; position: absolute; left: 4px; right: 4px; bottom: 0; height: 2px; background: #76b9ed; }
.badge { position: absolute; left: 22px; top: 17px; min-width: 11px; height: 18px; line-height: 16px; padding: 0 3px; box-sizing: border-box; border-radius: 9px; border: 1px solid #aaa; background: #2b2b33; font-size: 9.500px; font-weight: 700; text-align: center; }
.badge-red { position: absolute; left: 25px; top: 22px; padding: 0 2px; height: 12px; line-height: 12px; background: #e53935; border-radius: 2px; font-size: 8px; }
.app-dot { position: absolute; left: 19px; top: 15px; width: 16px; height: 16px; }
.sys { margin-left: auto; display: flex; align-items: center; padding-right: 13px; }
.weather { width: 24px; height: 24px; margin-right: 9px; }
.weather-text { font-size: 13.600px; margin-right: 10px; white-space: nowrap; letter-spacing: -.1px; }
.tray { width: 23.500px; height: 39px; display: flex; align-items: center; justify-content: center; }
.tray.hl { background: #4a4a5a; }
.tray svg { width: 16px; height: 16px; }
.clock { width: 76px; display: flex; flex-direction: column; align-items: center; font-size: 11.500px; line-height: 17px; letter-spacing: -.2px; }
.notif { width: 36px; height: 39px; display: flex; align-items: center; justify-content: center; position: relative; }
.notif svg { width: 18px; height: 18px; }
.notif span { position: absolute; left: 18px; top: 20px; width: 15px; height: 15px; border-radius: 50%; border: 1px solid #999; background: #2a2a33; box-sizing: border-box; font-size: 9.500px; line-height: 13px; text-align: center; }
</style>
